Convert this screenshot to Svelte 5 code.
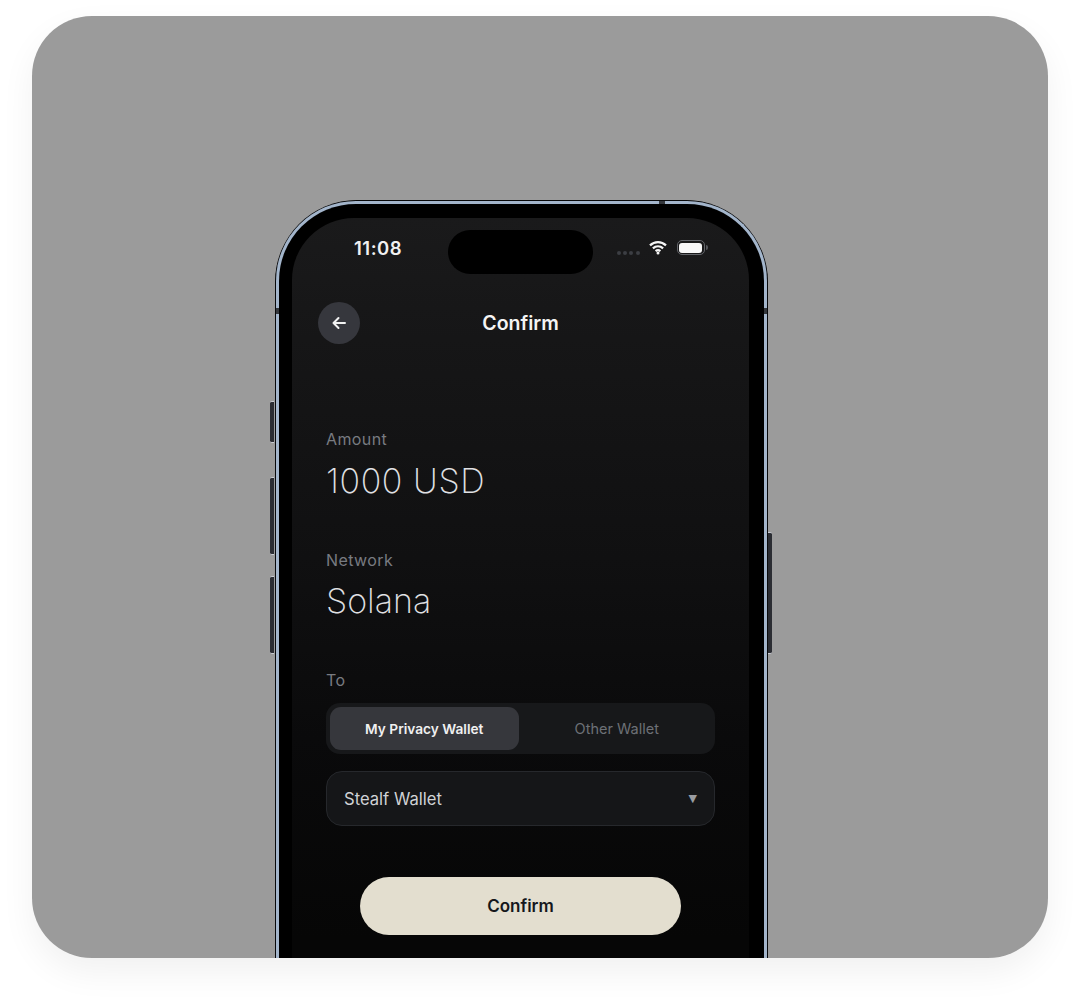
<script lang="ts">
	let tab = $state('mine');
	const dots = [0, 1, 2, 3];
</script>

<div class="page">
	<div class="card">
		<div class="phone">
			<span class="key left mute"></span>
			<span class="key left up"></span>
			<span class="key left down"></span>
			<span class="key right power"></span>
			<span class="band top"></span>
			<span class="band side-l"></span>
			<span class="band side-r"></span>
			<div class="rim">
				<div class="screen">
					<div class="status">
						<span class="time">11:08</span>
						<div class="island"></div>
						<div class="indicators">
							<div class="dots">
								{#each dots as d (d)}<i></i>{/each}
							</div>
							<svg class="wifi" width="18" height="15" viewBox="0 0 18 15" fill="none" stroke="#f5f5f5" stroke-width="2.2" aria-hidden="true">
								<path d="M1 5.4C5.6 .9 12.4 .9 17 5.4" />
								<path d="M3.9 8.4C6.9 5.6 11.1 5.6 14.1 8.4" />
								<path d="M6.6 11.1C8 9.9 10 9.9 11.4 11.1" />
								<circle cx="9" cy="13" r="1.5" fill="#f5f5f5" stroke="none" />
							</svg>
							<div class="battery"><b></b></div>
						</div>
					</div>

					<header class="nav">
						<button class="back" aria-label="Back">
							<svg width="16" height="14" viewBox="0 0 16 14" fill="none" stroke="#f2f2f2" stroke-width="2" stroke-linecap="round" stroke-linejoin="round">
								<path d="M14 7H2.5M7.5 2 2.5 7l5 5" />
							</svg>
						</button>
						<h1>Confirm</h1>
					</header>

					<section class="field amount">
						<div class="label">Amount</div>
						<div class="value">1000 USD</div>
					</section>
					<section class="field network">
						<div class="label">Network</div>
						<div class="value">Solana</div>
					</section>

					<section class="to">
						<div class="label">To</div>
						<div class="tabs">
							<button class:active={tab === 'mine'} onclick={() => (tab = 'mine')}>My Privacy Wallet</button>
							<button class:active={tab === 'other'} onclick={() => (tab = 'other')}>Other Wallet</button>
						</div>
						<div class="select">
							<span>Stealf Wallet</span>
							<span class="caret">▼</span>
						</div>
					</section>

					<button class="confirm">Confirm</button>
				</div>
			</div>
		</div>
	</div>
</div>

<style>
	:global(body) {
		background: #fff;
	}

	.page {
		padding: 16px 32px 47px;
		font-family: Inter, 'Liberation Sans', sans-serif;
	}

	.card {
		height: 942px;
		box-sizing: border-box;
		padding: 184px 0 0 243px;
		overflow: hidden;
		background: #9b9b9b;
		border-radius: 60px;
		box-shadow: 0 14px 34px rgba(0, 0, 0, 0.06);
	}

	.phone {
		position: relative;
		width: 493px;
		height: 900px;
		box-sizing: border-box;
		background: #000;
		border: 1px solid #08090b;
		border-bottom: 0;
		border-radius: 82px 82px 0 0;
	}

	.rim {
		height: 100%;
		box-sizing: border-box;
		padding: 14px 15px 0 13px;
		border: 3px solid #a3b5cb;
		border-bottom: 0;
		border-radius: 80px 80px 0 0;
	}

	.screen {
		height: 100%;
		padding: 0 34px;
		border-radius: 62px 62px 0 0;
		background: linear-gradient(180deg, #1a1a1b 0, #161617 120px, #101011 340px, #0a0a0b 520px, #060606 720px);
	}

	.key {
		position: absolute;
		width: 4px;
		background: #2b2d33;
		border-top: 1px solid #c9ccd2;
		border-bottom: 1px solid #c9ccd2;
	}

	.key.left {
		left: -6px;
		border-radius: 2px 0 0 2px;
	}

	.key.right {
		right: -5px;
		border-radius: 0 2px 2px 0;
	}

	.mute { top: 200px; height: 40px; }
	.up { top: 276px; height: 76px; }
	.down { top: 375px; height: 76px; }
	.power { top: 331px; height: 120px; }

	.band {
		position: absolute;
		background: #33363b;
	}

	.band.top { top: 0; left: 383px; width: 6px; height: 3px; }
	.band.side-l { top: 107px; left: 0; width: 3px; height: 6px; }
	.band.side-r { top: 107px; right: 0; width: 3px; height: 6px; }

	.status {
		display: flex;
		align-items: center;
		height: 44px;
		padding-top: 12px;
	}

	.time {
		width: 122px;
		padding-left: 28px;
		box-sizing: border-box;
		color: #f1f1f1;
		font-size: 18.5px;
		font-weight: 600;
		letter-spacing: 0.5px;
		margin-top: -8px;
	}

	.island {
		width: 145px;
		height: 44px;
		border-radius: 22px;
		background: #000;
	}

	.indicators {
		display: flex;
		align-items: center;
		margin-left: 24px;
		margin-top: -9px;
	}

	.dots {
		display: flex;
		gap: 2.2px;
		margin-top: 11px;
	}

	.dots i {
		width: 4px;
		height: 4px;
		border-radius: 50%;
		background: #3c3e43;
	}

	.wifi {
		margin-left: 9px;
	}

	.battery {
		position: relative;
		width: 28px;
		height: 15px;
		margin-left: 10px;
		box-sizing: border-box;
		padding: 1.5px;
		border: 1.5px solid #63656a;
		border-radius: 5px;
	}

	.battery b {
		display: block;
		height: 100%;
		background: #f7f7f7;
		border-radius: 3px;
	}

	.battery::after {
		content: '';
		position: absolute;
		right: -4px;
		top: 3.5px;
		width: 2px;
		height: 5px;
		background: #55575b;
		border-radius: 0 2px 2px 0;
	}

	.nav {
		position: relative;
		display: flex;
		align-items: center;
		justify-content: center;
		height: 42px;
		margin-top: 28px;
	}

	.back {
		position: absolute;
		left: -8px;
		top: 0;
		display: flex;
		align-items: center;
		justify-content: center;
		width: 42px;
		height: 42px;
		padding: 0;
		border: 0;
		border-radius: 50%;
		background: #36373d;
	}

	h1 {
		margin: 0;
		color: #f4f4f4;
		font-size: 19.5px;
		font-weight: 600;
	}

	.field.amount {
		margin-top: 84px;
	}

	.field.network {
		margin-top: 46px;
	}

	.label {
		height: 22px;
		line-height: 22px;
		color: #787b81;
		font-size: 16px;
		font-weight: 400;
		letter-spacing: 0.4px;
	}

	.value {
		margin-top: 9px;
		height: 44px;
		line-height: 44px;
		color: #e0e1e4;
		font-size: 34px;
		font-weight: 250;
		letter-spacing: 0.6px;
	}

	.network .value {
		margin-top: 8px;
		letter-spacing: 0;
	}

	.to {
		margin-top: 46px;
	}

	.tabs {
		display: flex;
		gap: 4px;
		height: 51px;
		margin-top: 12px;
		padding: 4px;
		box-sizing: border-box;
		background: #17181a;
		border-radius: 14px;
	}

	.tabs button {
		flex: 1;
		padding: 0;
		border: 0;
		border-radius: 11px;
		background: transparent;
		color: #6d7076;
		font: 400 14.5px Inter, 'Liberation Sans', sans-serif;
	}

	.tabs button.active {
		background: #36373c;
		color: #f0f0f0;
		font-size: 13.7px;
		font-weight: 600;
	}

	.select {
		display: flex;
		align-items: center;
		justify-content: space-between;
		height: 55px;
		margin-top: 17px;
		padding: 0 17px;
		box-sizing: border-box;
		background: #151618;
		border: 1px solid #26282c;
		border-radius: 16px;
		color: #d0d2d5;
		font-size: 16.6px;
	}

	.caret {
		color: #9a9ca1;
		font-size: 11px;
		font-family: 'DejaVu Sans', sans-serif;
	}

	.confirm {
		display: block;
		width: 321px;
		height: 58px;
		margin: 51px auto 0;
		padding: 0;
		border: 0;
		border-radius: 29px;
		background: #e3decf;
		color: #15171c;
		font: 600 17px Inter, 'Liberation Sans', sans-serif;
	}
</style>
